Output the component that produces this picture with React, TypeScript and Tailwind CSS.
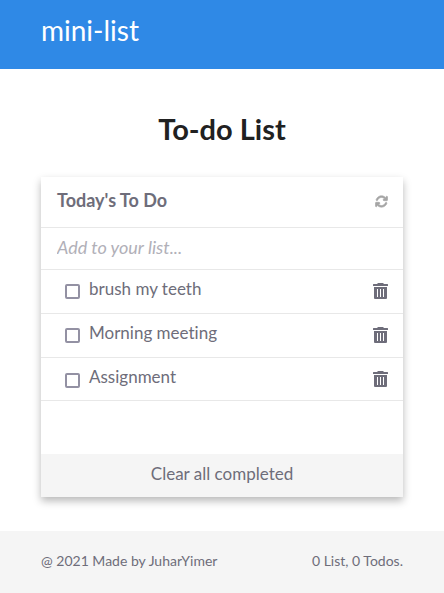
import { useState } from 'react';
import { FaArrowsRotate } from 'react-icons/fa6';

const initialTasks = ['brush my teeth', 'Morning meeting', 'Assignment'];

function TrashIcon() {
  return (
    <svg viewBox="0 0 15 16" className="h-4 w-[15px]" fill="currentColor" aria-hidden="true">
      <path
        fillRule="evenodd"
        d="M5 0h5l1 1h3.5a.5.5 0 0 1 .5.5V3H0V1.5a.5.5 0 0 1 .5-.5H4zM1 4h13v11a1 1 0 0 1-1 1H2a1 1 0 0 1-1-1zM4 6v8h1V6zm3 0v8h1V6zm3 0v8h1V6z"
      />
    </svg>
  );
}

function TaskRow({ label, id }: { label: string; id: string }) {
  const [done, setDone] = useState(false);
  return (
    <li className="flex h-11 items-center border-b border-[#e8e8e8] pr-[15px] pb-0.5 pl-6 last:h-[43px] last:pb-0">
      <input
        id={id}
        type="checkbox"
        checked={done}
        onChange={() => setDone(!done)}
        className="mt-0.5 size-[15px] shrink-0 appearance-none rounded-xs border-2 border-[#9391a3] bg-white checked:bg-[#9391a3]"
      />
      <label htmlFor={id} className="ml-[9px] flex-1 pb-1 text-[17px] leading-6">
        {label}
      </label>
      <button type="button" aria-label={`Delete ${label}`} className="text-[#6e6d7a]">
        <TrashIcon />
      </button>
    </li>
  );
}

export default function App() {
  return (
    <div className="flex min-h-screen flex-col bg-white font-['Lato',sans-serif] text-[#6e6d7a] [font-variant-ligatures:none]">
      <header className="h-[69px] bg-[#2f89e6] px-[41px] pt-[10px]">
        <a href="#" className="text-[28px] leading-10 text-white">
          mini-list
        </a>
      </header>

      <main className="flex-1 px-[41px] pt-10 pb-[34px]">
        <h1 className="text-center text-[29px] leading-10 font-bold text-[#212121]">To-do List</h1>

        <section className="mt-7 bg-white shadow-[0_4px_8px_0_rgba(0,0,0,0.28)]">
          <div className="flex h-[51px] items-center justify-between border-b border-[#e8e8e8] pr-[15px] pb-0.5 pl-4">
            <h2 className="pb-0.5 text-[18px] leading-6 font-bold">Today's To Do</h2>
            <button type="button" aria-label="Refresh" className="text-[#a5a5a5]">
              <FaArrowsRotate className="size-[13px] stroke-current stroke-[24px]" />
            </button>
          </div>
          <input
            type="text"
            aria-label="Add to your list"
            placeholder="Add to your list..."
            className="block h-[42px] w-full border-b border-[#e8e8e8] px-4 pb-1 text-[18px] italic outline-none placeholder:text-[#b1b0b8]"
          />
          <ul>
            {initialTasks.map((task, i) => (
              <TaskRow key={task} id={`task-${i}`} label={task} />
            ))}
          </ul>
          <button type="button" className="mt-[53px] block h-[43px] w-full bg-[#f5f5f5] pb-1 text-[17px]">
            Clear all completed
          </button>
        </section>
      </main>

      <footer className="flex h-[62px] items-center justify-between bg-[#f5f5f5] px-[41px] pb-0.5 text-[14px] leading-5">
        <p>@ 2021 Made by JuharYimer</p>
        <p>0 List, 0 Todos.</p>
      </footer>
    </div>
  );
}
